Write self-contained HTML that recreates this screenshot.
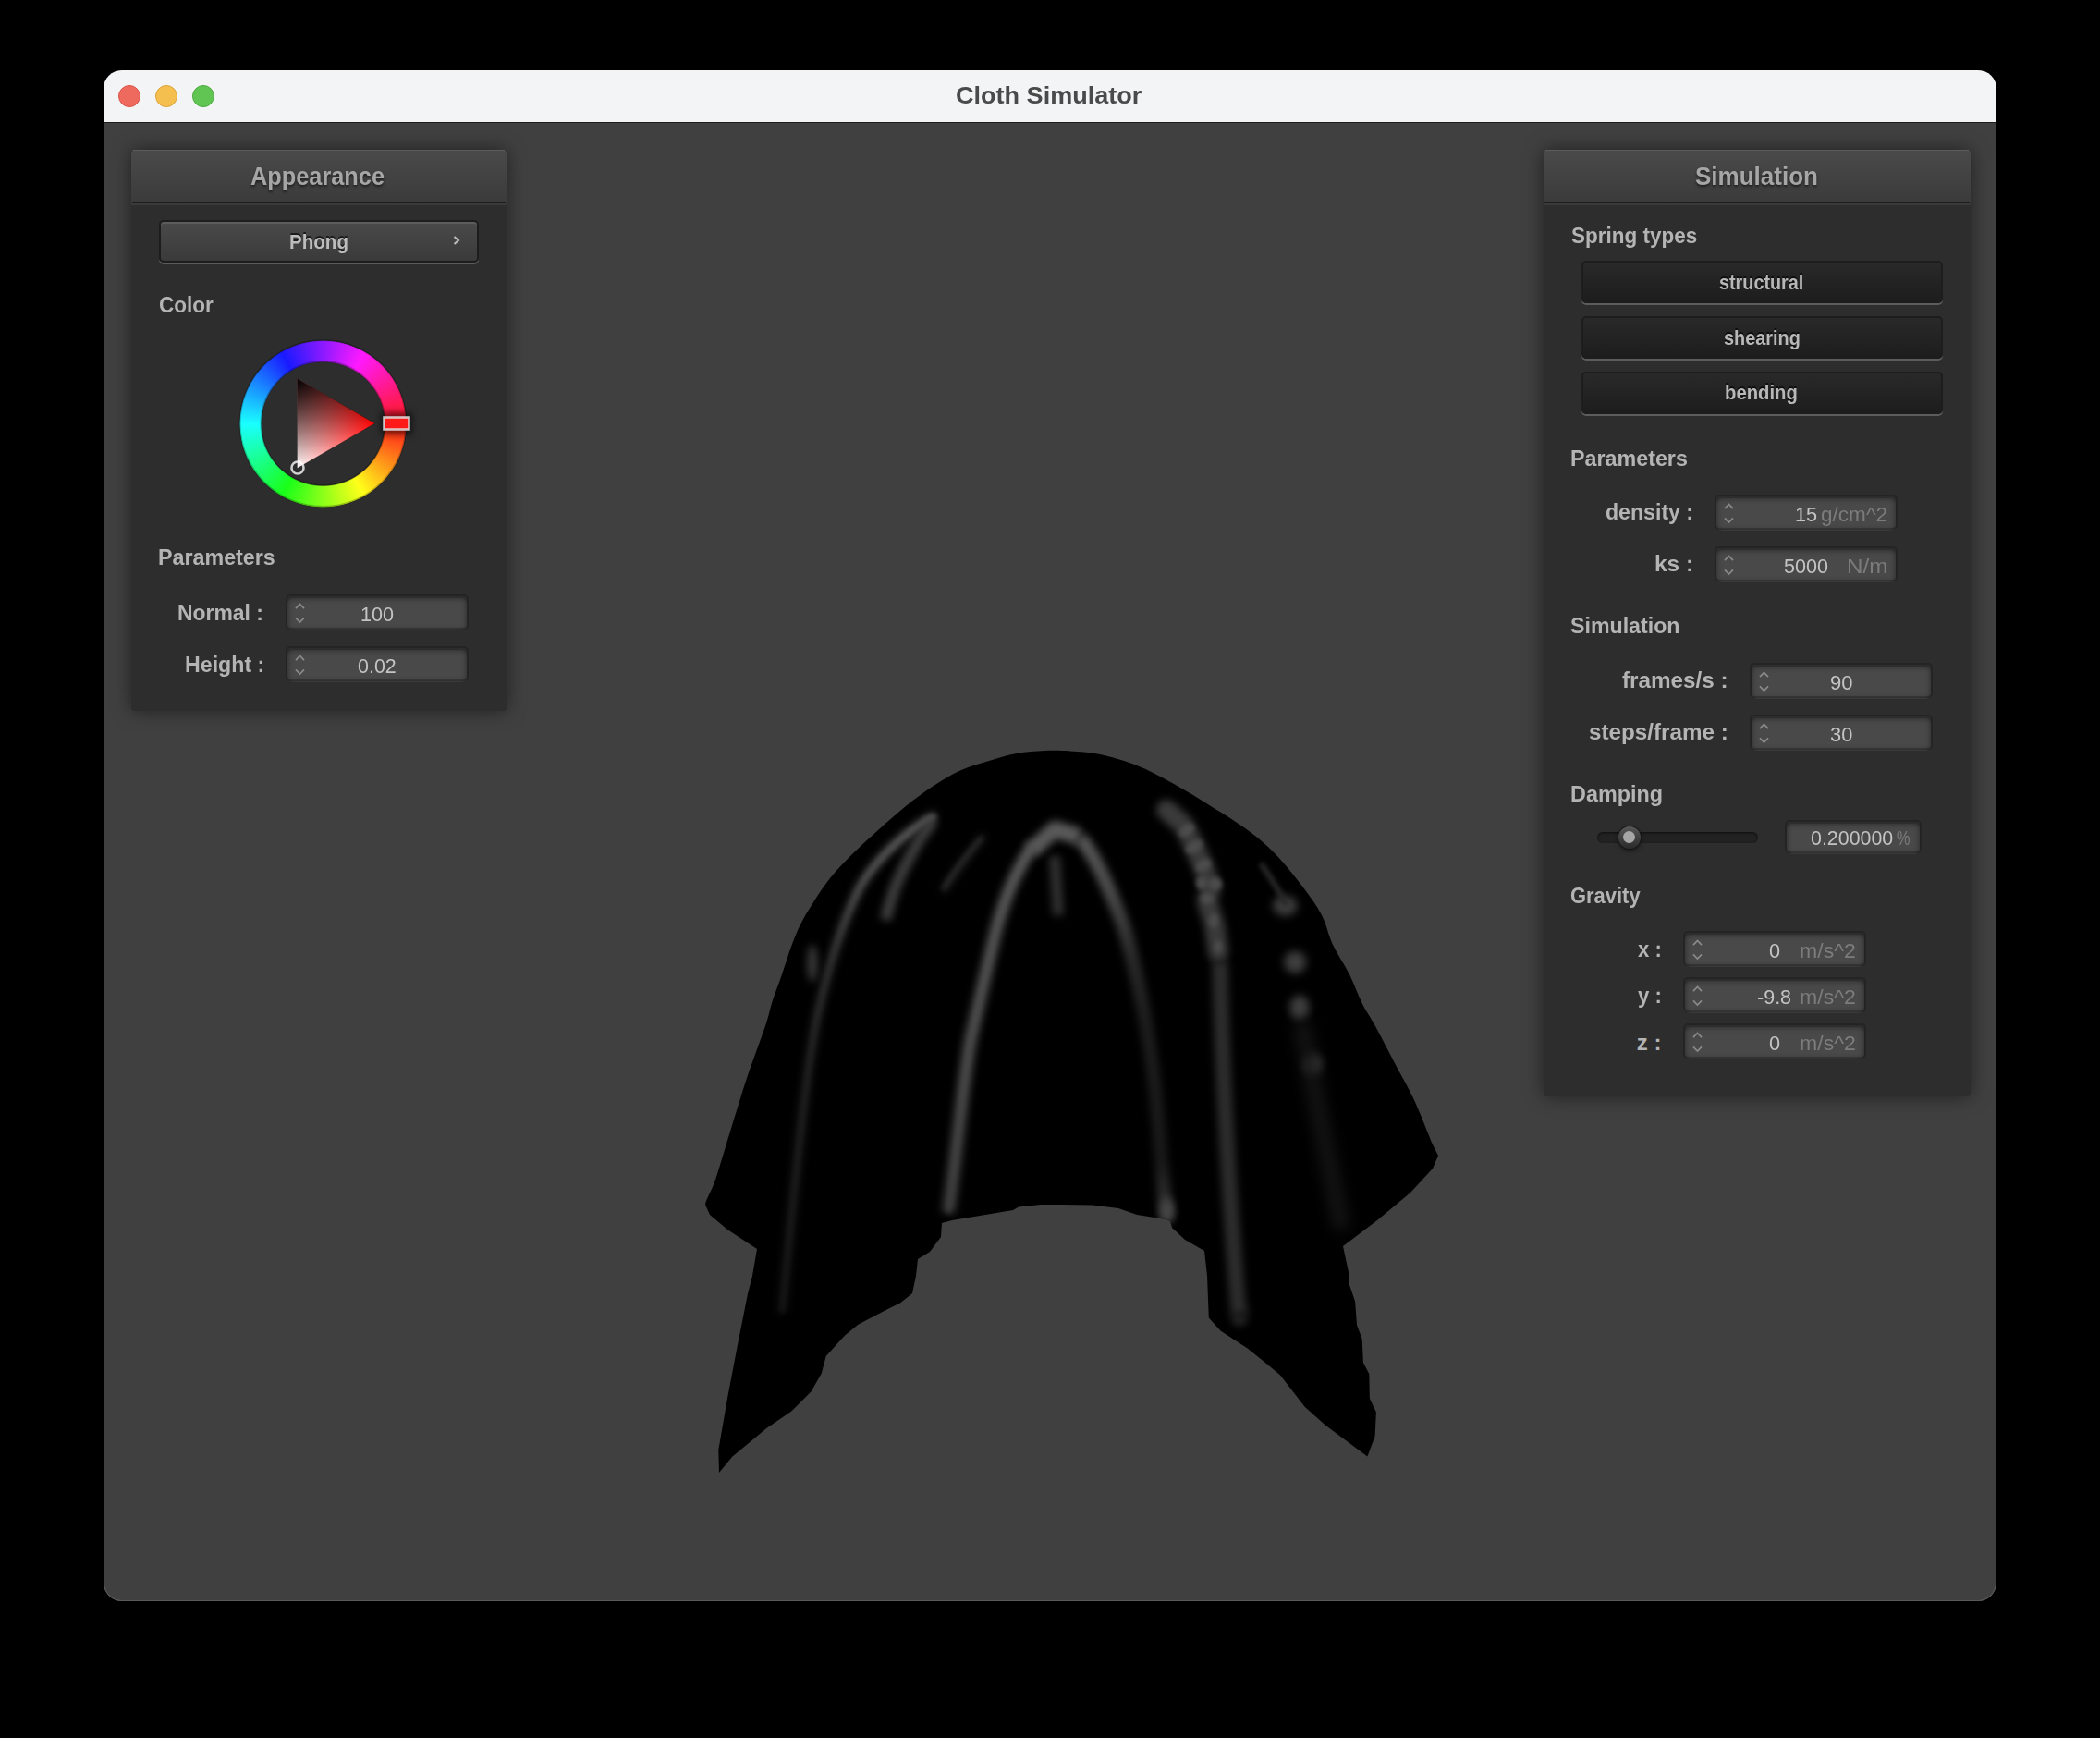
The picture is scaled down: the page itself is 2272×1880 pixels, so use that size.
<!DOCTYPE html>
<html><head><meta charset="utf-8"><title>Cloth Simulator</title>
<style>
html,body{margin:0;padding:0}
body{width:2272px;height:1880px;background:#000;position:relative;overflow:hidden;font-family:"Liberation Sans",sans-serif}
.t{position:absolute;white-space:nowrap;line-height:1;font-family:"Liberation Sans",sans-serif;transform-origin:0 0}
.abs{position:absolute}
#win{position:absolute;left:112px;top:76px;width:2048px;height:1656px;border-radius:20px;background:#404040;box-shadow:inset 0 0 0 1px #5a5a5a}
#titlebar{position:absolute;left:112px;top:76px;width:2048px;height:57px;border-radius:20px 20px 0 0;background:#f3f4f6;border-bottom:1px solid #1c1c1c;box-sizing:border-box}
.light{position:absolute;width:24px;height:24px;border-radius:50%;box-sizing:border-box;border:1px solid}
.panel{position:absolute;background:#2d2d2d;border-radius:4px;box-shadow:0 0 20px rgba(0,0,0,0.5)}
.phdr{position:absolute;height:60px;border-radius:4px 4px 0 0;background:linear-gradient(#4a4a4a,#3a3a3a)}
.phdr::before{content:"";position:absolute;left:2px;right:2px;top:0;height:1px;background:#5c5c5c}
.phdr::after{content:"";position:absolute;left:1px;right:1px;top:56px;height:2px;background:#1d1d1d}
.btn{position:absolute;box-sizing:border-box;border:2px solid #1d1d1d;border-radius:5px;background:linear-gradient(#4a4a4a,#3a3a3a);box-shadow:0 2px 0 #5c5c5c,inset 0 2px 0 #5c5c5c}
.btn.pushed{background:linear-gradient(#292929,#1d1d1d);box-shadow:0 2px 0 #5c5c5c}
.tbf{position:absolute;border-radius:6px;background:#494949;box-shadow:inset 0 0 5px 1px rgba(28,28,28,0.55)}
.tbs{position:absolute;box-sizing:border-box;border:2px solid rgba(0,0,0,0.2);border-radius:5px}
.track{position:absolute;border-radius:6px;background:#222;box-shadow:inset 0 1px 3px rgba(0,0,0,0.6)}
.knob{position:absolute;border-radius:50%;background:linear-gradient(#575757,#2a2a2a);box-shadow:0 0 0 1px rgba(20,20,20,0.8),0 2px 5px rgba(0,0,0,0.6)}
.knobdot{position:absolute;border-radius:50%;background:#a6a6a6}

</style></head><body>
<div id="win"></div>
<div id="titlebar"></div>
<div class="light" style="left:128px;top:92px;background:#ee6a5f;border-color:#d9554a"></div>
<div class="light" style="left:168px;top:92px;background:#f5bf4f;border-color:#dca33a"></div>
<div class="light" style="left:208px;top:92px;background:#61c554;border-color:#4ea93f"></div>
<div class="t" style="left:1033.98px;top:90.18px;font-size:26.5px;font-weight:bold;color:#4a4a4a;transform:scaleX(1.0204);">Cloth Simulator</div>
<svg class="abs" style="left:0;top:0" width="2272" height="1880" viewBox="0 0 2272 1880">
<defs><clipPath id="cc"><path d="M828 1110 C832.3 1097.0 833.0 1091.3 836 1082 C839.0 1072.7 842.7 1063.7 846 1054 C849.3 1044.3 852.7 1033.0 856 1024 C859.3 1015.0 862.0 1008.0 866 1000 C870.0 992.0 874.7 984.3 880 976 C885.3 967.7 891.3 958.3 898 950 C904.7 941.7 911.3 934.7 920 926 C928.7 917.3 940.0 907.0 950 898 C960.0 889.0 970.0 880.0 980 872 C990.0 864.0 1000.0 856.5 1010 850 C1020.0 843.5 1030.0 837.5 1040 833 C1050.0 828.5 1060.0 826.0 1070 823 C1080.0 820.0 1090.0 816.8 1100 815 C1110.0 813.2 1120.3 812.4 1130 812 C1139.7 811.6 1148.0 811.7 1158 812.4 C1168.0 813.1 1178.0 813.4 1190 816 C1202.0 818.6 1216.7 822.7 1230 828 C1243.3 833.3 1256.7 840.7 1270 848 C1283.3 855.3 1296.7 863.7 1310 872 C1323.3 880.3 1338.3 889.3 1350 898 C1361.7 906.7 1370.0 913.7 1380 924 C1390.0 934.3 1401.7 949.0 1410 960 C1418.3 971.0 1424.7 979.7 1430 990 C1435.3 1000.3 1437.0 1011.3 1442 1022 C1447.0 1032.7 1454.7 1043.3 1460 1054 C1465.3 1064.7 1469.3 1076.7 1474 1086 C1478.7 1095.3 1482.0 1099.0 1488 1110 C1494.0 1121.0 1503.0 1138.7 1510 1152 C1517.0 1165.3 1523.3 1175.7 1530 1190 C1536.7 1204.3 1545.7 1228.0 1550 1238 L1556 1250 L1550 1264 L1526 1290 L1490 1320 L1453 1348 L1459 1376 L1459.7 1388.9 L1466.1 1407.8 L1468 1433.2 L1473.7 1448.4 L1474.9 1473.7 L1481.3 1486.3 L1481.9 1512.9 L1488.9 1527.5 L1487.6 1553.4 L1479.4 1575.6 L1434.4 1542 L1411.6 1521.8 L1385.1 1487.6 L1368.6 1473.7 L1349.6 1458.5 L1320.5 1439.5 L1307.8 1425.6 L1306 1380 L1303 1353 L1282 1341 L1268 1328 L1266 1321 L1262 1319 L1230 1314 L1210 1307 L1182 1303.6 L1150 1303 L1126 1303 L1102 1305.6 L1096 1309 L1030 1320 L1019 1323 L1018 1338 L1006 1354 L993 1362 L991 1380 L987 1399 L974.2 1409.3 L958.1 1417.3 L928.4 1432.8 L914.1 1444.6 L906.1 1453.2 L893.7 1466.9 L888.8 1485.4 L877.6 1505.2 L856.6 1526.3 L829.3 1544.9 L807 1563.4 L792.2 1575.8 L778 1593.1 L777.3 1568.4 L787.2 1511.4 L797.1 1459.4 L808.9 1400 L814 1380 L819 1351 L787 1330 L768 1314 L763 1303 C764.0 1296.7 769.5 1289.2 774 1276 C778.5 1262.8 784.0 1243.3 790 1224 C796.0 1204.7 803.7 1179.0 810 1160 L828 1110 Z"/></clipPath>
<filter id="b2" color-interpolation-filters="sRGB" filterUnits="userSpaceOnUse" x="700" y="780" width="900" height="850"><feGaussianBlur stdDeviation="2.5" color-interpolation-filters="sRGB"/></filter>
<filter id="b4" color-interpolation-filters="sRGB" filterUnits="userSpaceOnUse" x="700" y="780" width="900" height="850"><feGaussianBlur stdDeviation="4" color-interpolation-filters="sRGB"/></filter>
<filter id="b8" color-interpolation-filters="sRGB" filterUnits="userSpaceOnUse" x="700" y="780" width="900" height="850"><feGaussianBlur stdDeviation="8" color-interpolation-filters="sRGB"/></filter>
</defs>
<path d="M828 1110 C832.3 1097.0 833.0 1091.3 836 1082 C839.0 1072.7 842.7 1063.7 846 1054 C849.3 1044.3 852.7 1033.0 856 1024 C859.3 1015.0 862.0 1008.0 866 1000 C870.0 992.0 874.7 984.3 880 976 C885.3 967.7 891.3 958.3 898 950 C904.7 941.7 911.3 934.7 920 926 C928.7 917.3 940.0 907.0 950 898 C960.0 889.0 970.0 880.0 980 872 C990.0 864.0 1000.0 856.5 1010 850 C1020.0 843.5 1030.0 837.5 1040 833 C1050.0 828.5 1060.0 826.0 1070 823 C1080.0 820.0 1090.0 816.8 1100 815 C1110.0 813.2 1120.3 812.4 1130 812 C1139.7 811.6 1148.0 811.7 1158 812.4 C1168.0 813.1 1178.0 813.4 1190 816 C1202.0 818.6 1216.7 822.7 1230 828 C1243.3 833.3 1256.7 840.7 1270 848 C1283.3 855.3 1296.7 863.7 1310 872 C1323.3 880.3 1338.3 889.3 1350 898 C1361.7 906.7 1370.0 913.7 1380 924 C1390.0 934.3 1401.7 949.0 1410 960 C1418.3 971.0 1424.7 979.7 1430 990 C1435.3 1000.3 1437.0 1011.3 1442 1022 C1447.0 1032.7 1454.7 1043.3 1460 1054 C1465.3 1064.7 1469.3 1076.7 1474 1086 C1478.7 1095.3 1482.0 1099.0 1488 1110 C1494.0 1121.0 1503.0 1138.7 1510 1152 C1517.0 1165.3 1523.3 1175.7 1530 1190 C1536.7 1204.3 1545.7 1228.0 1550 1238 L1556 1250 L1550 1264 L1526 1290 L1490 1320 L1453 1348 L1459 1376 L1459.7 1388.9 L1466.1 1407.8 L1468 1433.2 L1473.7 1448.4 L1474.9 1473.7 L1481.3 1486.3 L1481.9 1512.9 L1488.9 1527.5 L1487.6 1553.4 L1479.4 1575.6 L1434.4 1542 L1411.6 1521.8 L1385.1 1487.6 L1368.6 1473.7 L1349.6 1458.5 L1320.5 1439.5 L1307.8 1425.6 L1306 1380 L1303 1353 L1282 1341 L1268 1328 L1266 1321 L1262 1319 L1230 1314 L1210 1307 L1182 1303.6 L1150 1303 L1126 1303 L1102 1305.6 L1096 1309 L1030 1320 L1019 1323 L1018 1338 L1006 1354 L993 1362 L991 1380 L987 1399 L974.2 1409.3 L958.1 1417.3 L928.4 1432.8 L914.1 1444.6 L906.1 1453.2 L893.7 1466.9 L888.8 1485.4 L877.6 1505.2 L856.6 1526.3 L829.3 1544.9 L807 1563.4 L792.2 1575.8 L778 1593.1 L777.3 1568.4 L787.2 1511.4 L797.1 1459.4 L808.9 1400 L814 1380 L819 1351 L787 1330 L768 1314 L763 1303 C764.0 1296.7 769.5 1289.2 774 1276 C778.5 1262.8 784.0 1243.3 790 1224 C796.0 1204.7 803.7 1179.0 810 1160 L828 1110 Z" fill="#000"/>
<g clip-path="url(#cc)">
<linearGradient id="gL" gradientUnits="userSpaceOnUse" x1="0" y1="880" x2="0" y2="1420"><stop offset="0" stop-color="#5c5c5c"/><stop offset="0.12" stop-color="#505050"/><stop offset="0.3" stop-color="#303030"/><stop offset="0.5" stop-color="#222"/><stop offset="1" stop-color="#161616"/></linearGradient>
<linearGradient id="gC" gradientUnits="userSpaceOnUse" x1="0" y1="900" x2="0" y2="1320"><stop offset="0" stop-color="#555"/><stop offset="0.5" stop-color="#4a4a4a"/><stop offset="1" stop-color="#3c3c3c"/></linearGradient>
<linearGradient id="gR" gradientUnits="userSpaceOnUse" x1="0" y1="900" x2="0" y2="1320"><stop offset="0" stop-color="#575757"/><stop offset="0.15" stop-color="#4a4a4a"/><stop offset="0.33" stop-color="#282828"/><stop offset="0.5" stop-color="#1c1c1c"/><stop offset="0.85" stop-color="#181818"/><stop offset="1" stop-color="#3a3a3a"/></linearGradient>
<!-- soft edge sheen on left side -->

<!-- left ridge -->
<path d="M1012 882 C 985 896, 950 925, 930 960 C 910 1000, 895 1050, 884 1100 C 870 1170, 858 1300, 846 1420" fill="none" stroke="url(#gL)" stroke-width="9" filter="url(#b4)"/>
<path d="M1012 882 C 985 896, 950 925, 930 960 C 910 1000, 895 1050, 884 1100 C 870 1170, 858 1300, 846 1420" fill="none" stroke="url(#gL)" stroke-width="4" filter="url(#b2)" opacity="0.8"/>
<path d="M1010 888 C 995 905, 985 925, 975 945 S 962 980, 958 995" fill="none" stroke="#3e3e3e" stroke-width="12" filter="url(#b4)"/>
<path d="M1064 904 C 1047 925, 1032 945, 1020 964" fill="none" stroke="#2c2c2c" stroke-width="6" filter="url(#b4)"/><path d="M1062 906 C 1045 925, 1030 945, 1020 962" fill="none" stroke="#333" stroke-width="2" filter="url(#b2)"/>
<ellipse cx="879" cy="1042" rx="6" ry="20" fill="#363636" filter="url(#b4)"/>
<!-- center-left ridge -->
<path d="M1118 914 C 1100 940, 1086 975, 1078 1005 C 1068 1045, 1058 1090, 1050 1125 C 1042 1170, 1036 1240, 1026 1312" fill="none" stroke="url(#gC)" stroke-width="14" filter="url(#b4)"/>
<path d="M1118 914 C 1100 940, 1086 975, 1078 1005 C 1068 1045, 1058 1090, 1050 1125 C 1042 1170, 1036 1240, 1026 1312" fill="none" stroke="url(#gC)" stroke-width="4" filter="url(#b2)" opacity="0.7"/>
<!-- top cap -->
<path d="M1116 920 L 1141 897 L 1168 905" fill="none" stroke="#595959" stroke-width="18" stroke-linejoin="round" filter="url(#b4)"/>
<path d="M1141 926 L 1145 990" fill="none" stroke="#303030" stroke-width="12" filter="url(#b4)"/>
<!-- center-right ridge -->
<path d="M1168 906 C 1185 925, 1200 960, 1215 1000 C 1230 1050, 1242 1110, 1250 1180 C 1255 1230, 1258 1280, 1262 1318" fill="none" stroke="url(#gR)" stroke-width="15" filter="url(#b4)"/>
<ellipse cx="1263" cy="1310" rx="7" ry="14" fill="#464646" filter="url(#b4)"/>
<!-- bumpy strip -->
<path d="M1262 876 L 1280 892 L 1292 915 L 1302 938 L 1310 960 L 1306 975 L 1314 1000 L 1318 1030" fill="none" stroke="#3a3a3a" stroke-width="22" stroke-linejoin="round" stroke-linecap="round" filter="url(#b4)"/>
<g fill="#4c4c4c" filter="url(#b2)">
<ellipse cx="1284" cy="898" rx="9" ry="6" transform="rotate(-35 1284 898)"/>
<ellipse cx="1292" cy="916" rx="10" ry="6" transform="rotate(-30 1292 916)"/>
<ellipse cx="1302" cy="936" rx="9" ry="6" transform="rotate(-30 1302 936)"/>
<ellipse cx="1300" cy="955" rx="6" ry="7"/>
<ellipse cx="1315" cy="956" rx="7" ry="7"/>
<ellipse cx="1306" cy="972" rx="7" ry="6"/>
<ellipse cx="1313" cy="996" rx="5" ry="8"/>
<ellipse cx="1318" cy="1024" rx="4" ry="7"/>
</g>
<path d="M1320 1040 C 1321 1100, 1324 1200, 1334 1340 S 1340 1400, 1342 1420" fill="none" stroke="#2c2c2c" stroke-width="17" filter="url(#b4)"/>
<!-- far right -->
<g fill="#3e3e3e" filter="url(#b4)" transform="translate(1400 1060) scale(1.2) translate(-1400 -1060)">
<ellipse cx="1392" cy="993" rx="11" ry="9"/>
<ellipse cx="1401" cy="1044" rx="10" ry="10"/>
<ellipse cx="1405" cy="1085" rx="9" ry="11"/>
<ellipse cx="1417" cy="1136" rx="8" ry="10"/>
</g>
<path d="M1364 934 C 1375 950, 1385 965, 1392 980" fill="none" stroke="#282828" stroke-width="6" filter="url(#b2)"/>
<path d="M1408 1105 C 1422 1180, 1440 1270, 1452 1330" fill="none" stroke="#161616" stroke-width="16" filter="url(#b8)"/>

</g>
</svg>
<div class="panel" style="left:142px;top:162px;width:406px;height:607px"></div>
<div class="phdr" style="left:142px;top:162px;width:406px"></div>
<div class="panel" style="left:1670px;top:162px;width:462px;height:1024px"></div>
<div class="phdr" style="left:1670px;top:162px;width:462px"></div>
<div class="t" style="left:271.41px;top:177.03px;font-size:27.5px;font-weight:bold;color:#a6a6a6;transform:scaleX(0.9212);text-shadow:0 2px 3px rgba(0,0,0,0.55);">Appearance</div>
<div class="btn" style="left:172px;top:238px;width:346px;height:46px"></div>
<div class="t" style="left:313.07px;top:252.23px;font-size:21.5px;font-weight:bold;color:#bcbcbc;transform:scaleX(0.9562);text-shadow:0 -2px 0 rgba(0,0,0,0.6);">Phong</div>
<svg class="abs" style="left:487px;top:252px" width="14" height="16"><path d="M4.5 4 L9 8 L4.5 12" fill="none" stroke="#bdbdbd" stroke-width="2"/></svg>
<div class="t" style="left:171.88px;top:318.18px;font-size:24.5px;font-weight:bold;color:#b4b4b4;transform:scaleX(0.9195);">Color</div>
<div class="abs" style="left:259px;top:368px;width:181px;height:181px;border-radius:50%;background:conic-gradient(from 90deg,hsl(0,100%,55%),hsl(60,100%,55%),hsl(120,100%,55%),hsl(180,100%,55%),hsl(240,100%,55%),hsl(300,100%,55%),hsl(360,100%,55%));-webkit-mask:radial-gradient(circle,transparent 66.5px,#000 67.5px,#000 89.5px,transparent 90.5px);mask:radial-gradient(circle,transparent 66.5px,#000 67.5px,#000 89.5px,transparent 90.5px)"></div>
<svg class="abs" style="left:240px;top:350px" width="220" height="220" viewBox="0 0 220 220">
<defs>
<linearGradient id="tg1" gradientUnits="userSpaceOnUse" x1="165.5" y1="108" x2="81.5" y2="156.5"><stop offset="0" stop-color="hsl(0,100%,50%)"/><stop offset="1" stop-color="#fff"/></linearGradient>
<linearGradient id="tg2" gradientUnits="userSpaceOnUse" x1="123.5" y1="132.25" x2="81.5" y2="59.5"><stop offset="0" stop-color="#000" stop-opacity="0"/><stop offset="1" stop-color="#000" stop-opacity="1"/></linearGradient>
</defs>
<circle cx="109.5" cy="108" r="67" fill="none" stroke="rgba(0,0,0,0.25)" stroke-width="2"/>
<circle cx="109.5" cy="108" r="90" fill="none" stroke="rgba(0,0,0,0.25)" stroke-width="2"/>
<path d="M165.5 108 L81.5 156.5 L81.5 59.5 Z" fill="url(#tg1)"/>
<path d="M165.5 108 L81.5 156.5 L81.5 59.5 Z" fill="url(#tg2)" stroke="rgba(0,0,0,0.25)" stroke-width="1"/>
<circle cx="82" cy="156" r="6.5" fill="none" stroke="rgba(255,255,255,0.78)" stroke-width="2.5"/>
<filter id="bl" color-interpolation-filters="sRGB" filterUnits="userSpaceOnUse" x="140" y="70" width="80" height="80"><feGaussianBlur stdDeviation="3.5"/></filter>
<rect x="172" y="96" width="34" height="24" fill="rgba(0,0,0,0.55)" filter="url(#bl)"/>
<rect x="175.5" y="101.5" width="27" height="13" fill="hsl(0,100%,55%)" stroke="rgba(225,225,225,0.85)" stroke-width="2.6"/>
</svg>

<div class="t" style="left:170.95px;top:591.40px;font-size:24px;font-weight:bold;color:#b4b4b4;transform:scaleX(0.9696);">Parameters</div>
<div class="t" style="left:191.67px;top:650.90px;font-size:24px;font-weight:bold;color:#b4b4b4;transform:scaleX(0.9551);">Normal :</div>
<div class="tbf" style="left:311px;top:647px;width:194px;height:35px"></div>
<div class="tbs" style="left:309px;top:643px;width:198px;height:38px"></div>
<svg class="abs" style="left:0;top:0;overflow:visible" width="1" height="1"><path d="M320.0 658.1 L324.5 653.5 L329.0 658.1" fill="none" stroke="#8a8a8a" stroke-width="1.7"/><path d="M320.0 668.4 L324.5 673 L329.0 668.4" fill="none" stroke="#8a8a8a" stroke-width="1.7"/></svg>
<div class="t" style="left:389.68px;top:653.60px;font-size:22px;font-weight:normal;color:#c4c4c4;transform:scaleX(0.9810);">100</div>
<div class="t" style="left:199.55px;top:707.00px;font-size:24px;font-weight:bold;color:#b4b4b4;transform:scaleX(0.9661);">Height :</div>
<div class="tbf" style="left:311px;top:703px;width:194px;height:35px"></div>
<div class="tbs" style="left:309px;top:699px;width:198px;height:38px"></div>
<svg class="abs" style="left:0;top:0;overflow:visible" width="1" height="1"><path d="M320.0 714.1 L324.5 709.5 L329.0 714.1" fill="none" stroke="#8a8a8a" stroke-width="1.7"/><path d="M320.0 724.4 L324.5 729 L329.0 724.4" fill="none" stroke="#8a8a8a" stroke-width="1.7"/></svg>
<div class="t" style="left:387.27px;top:709.50px;font-size:22px;font-weight:normal;color:#c4c4c4;transform:scaleX(0.9756);">0.02</div>
<div class="t" style="left:1834.29px;top:177.03px;font-size:27.5px;font-weight:bold;color:#a6a6a6;transform:scaleX(0.9457);text-shadow:0 2px 3px rgba(0,0,0,0.55);">Simulation</div>
<div class="t" style="left:1700.30px;top:243.00px;font-size:24px;font-weight:bold;color:#b4b4b4;transform:scaleX(0.9370);">Spring types</div>
<div class="btn pushed" style="left:1711px;top:282px;width:391px;height:46px"></div>
<div class="t" style="left:1860.01px;top:296.43px;font-size:21.5px;font-weight:bold;color:#b8b8b8;transform:scaleX(0.9206);text-shadow:0 -2px 0 rgba(0,0,0,0.6);">structural</div>
<div class="btn pushed" style="left:1711px;top:342px;width:391px;height:46px"></div>
<div class="t" style="left:1864.81px;top:355.93px;font-size:21.5px;font-weight:bold;color:#b8b8b8;transform:scaleX(0.9246);text-shadow:0 -2px 0 rgba(0,0,0,0.6);">shearing</div>
<div class="btn pushed" style="left:1711px;top:402px;width:391px;height:46px"></div>
<div class="t" style="left:1865.68px;top:415.43px;font-size:21.5px;font-weight:bold;color:#b8b8b8;transform:scaleX(0.9437);text-shadow:0 -2px 0 rgba(0,0,0,0.6);">bending</div>
<div class="t" style="left:1698.74px;top:483.60px;font-size:24px;font-weight:bold;color:#b4b4b4;transform:scaleX(0.9704);">Parameters</div>
<div class="t" style="left:1737.04px;top:542.20px;font-size:24px;font-weight:bold;color:#b4b4b4;transform:scaleX(0.9634);">density :</div>
<div class="tbf" style="left:1857px;top:539px;width:194px;height:35px"></div>
<div class="tbs" style="left:1855px;top:535px;width:198px;height:38px"></div>
<svg class="abs" style="left:0;top:0;overflow:visible" width="1" height="1"><path d="M1866.0 550.1 L1870.5 545.5 L1875.0 550.1" fill="none" stroke="#8a8a8a" stroke-width="1.7"/><path d="M1866.0 560.4 L1870.5 565 L1875.0 560.4" fill="none" stroke="#8a8a8a" stroke-width="1.7"/></svg>
<div class="t" style="left:1941.77px;top:546.00px;font-size:22px;font-weight:normal;color:#c4c4c4;transform:scaleX(0.9885);">15</div>
<div class="t" style="left:1969.97px;top:546.00px;font-size:22px;font-weight:normal;color:#7c7c7c;transform:scaleX(1.0256);">g/cm^2</div>
<div class="t" style="left:1790.21px;top:598.20px;font-size:24px;font-weight:bold;color:#b4b4b4;transform:scaleX(1.0201);">ks :</div>
<div class="tbf" style="left:1857px;top:595px;width:194px;height:35px"></div>
<div class="tbs" style="left:1855px;top:591px;width:198px;height:38px"></div>
<svg class="abs" style="left:0;top:0;overflow:visible" width="1" height="1"><path d="M1866.0 606.1 L1870.5 601.5 L1875.0 606.1" fill="none" stroke="#8a8a8a" stroke-width="1.7"/><path d="M1866.0 616.4 L1870.5 621 L1875.0 616.4" fill="none" stroke="#8a8a8a" stroke-width="1.7"/></svg>
<div class="t" style="left:1929.72px;top:601.80px;font-size:22px;font-weight:normal;color:#c4c4c4;transform:scaleX(0.9799);">5000</div>
<div class="t" style="left:1998.07px;top:601.80px;font-size:22px;font-weight:normal;color:#7c7c7c;transform:scaleX(1.1007);">N/m</div>
<div class="t" style="left:1699.48px;top:665.30px;font-size:24px;font-weight:bold;color:#b4b4b4;transform:scaleX(0.9660);">Simulation</div>
<div class="t" style="left:1755.49px;top:724.20px;font-size:24px;font-weight:bold;color:#b4b4b4;transform:scaleX(1.0113);">frames/s :</div>
<div class="tbf" style="left:1895px;top:721px;width:194px;height:35px"></div>
<div class="tbs" style="left:1893px;top:717px;width:198px;height:38px"></div>
<svg class="abs" style="left:0;top:0;overflow:visible" width="1" height="1"><path d="M1904.0 732.1 L1908.5 727.5 L1913.0 732.1" fill="none" stroke="#8a8a8a" stroke-width="1.7"/><path d="M1904.0 742.4 L1908.5 747 L1913.0 742.4" fill="none" stroke="#8a8a8a" stroke-width="1.7"/></svg>
<div class="t" style="left:1979.70px;top:728.00px;font-size:22px;font-weight:normal;color:#c4c4c4;transform:scaleX(1.0022);">90</div>
<div class="t" style="left:1719.39px;top:780.10px;font-size:24px;font-weight:bold;color:#b4b4b4;transform:scaleX(1.0092);">steps/frame :</div>
<div class="tbf" style="left:1895px;top:777px;width:194px;height:35px"></div>
<div class="tbs" style="left:1893px;top:773px;width:198px;height:38px"></div>
<svg class="abs" style="left:0;top:0;overflow:visible" width="1" height="1"><path d="M1904.0 788.1 L1908.5 783.5 L1913.0 788.1" fill="none" stroke="#8a8a8a" stroke-width="1.7"/><path d="M1904.0 798.4 L1908.5 803 L1913.0 798.4" fill="none" stroke="#8a8a8a" stroke-width="1.7"/></svg>
<div class="t" style="left:1979.96px;top:784.00px;font-size:22px;font-weight:normal;color:#c4c4c4;transform:scaleX(0.9913);">30</div>
<div class="t" style="left:1698.74px;top:847.00px;font-size:24px;font-weight:bold;color:#b4b4b4;transform:scaleX(0.9739);">Damping</div>
<div class="track" style="left:1728px;top:900px;width:174px;height:12px"></div>
<div class="knob" style="left:1750.5px;top:893.5px;width:24px;height:24px"></div>
<div class="knobdot" style="left:1756px;top:899px;width:13px;height:13px"></div>
<div class="tbf" style="left:1933px;top:891px;width:144px;height:33px"></div>
<div class="tbs" style="left:1931px;top:887px;width:148px;height:36px"></div>
<div class="t" style="left:1959.27px;top:895.50px;font-size:22px;font-weight:normal;color:#c4c4c4;transform:scaleX(0.9729);">0.200000</div>
<div class="t" style="left:2052.15px;top:895.50px;font-size:22px;font-weight:normal;color:#7c7c7c;transform:scaleX(0.7389);">%</div>
<div class="t" style="left:1699.29px;top:957.00px;font-size:24px;font-weight:bold;color:#b4b4b4;transform:scaleX(0.9141);">Gravity</div>
<div class="t" style="left:1771.57px;top:1014.80px;font-size:24px;font-weight:bold;color:#b4b4b4;transform:scaleX(0.9216);">x :</div>
<div class="tbf" style="left:1823px;top:1011px;width:194px;height:35px"></div>
<div class="tbs" style="left:1821px;top:1007px;width:198px;height:38px"></div>
<svg class="abs" style="left:0;top:0;overflow:visible" width="1" height="1"><path d="M1832.0 1022.1 L1836.5 1017.5 L1841.0 1022.1" fill="none" stroke="#8a8a8a" stroke-width="1.7"/><path d="M1832.0 1032.4 L1836.5 1037 L1841.0 1032.4" fill="none" stroke="#8a8a8a" stroke-width="1.7"/></svg>
<div class="t" style="left:1913.66px;top:1017.70px;font-size:22px;font-weight:normal;color:#c4c4c4;transform:scaleX(0.9860);">0</div>
<div class="t" style="left:1947.03px;top:1017.70px;font-size:22px;font-weight:normal;color:#7c7c7c;transform:scaleX(1.0486);">m/s^2</div>
<div class="t" style="left:1771.57px;top:1065.10px;font-size:24px;font-weight:bold;color:#b4b4b4;transform:scaleX(0.9216);">y :</div>
<div class="tbf" style="left:1823px;top:1061px;width:194px;height:35px"></div>
<div class="tbs" style="left:1821px;top:1057px;width:198px;height:38px"></div>
<svg class="abs" style="left:0;top:0;overflow:visible" width="1" height="1"><path d="M1832.0 1072.1 L1836.5 1067.5 L1841.0 1072.1" fill="none" stroke="#8a8a8a" stroke-width="1.7"/><path d="M1832.0 1082.4 L1836.5 1087 L1841.0 1082.4" fill="none" stroke="#8a8a8a" stroke-width="1.7"/></svg>
<div class="t" style="left:1900.62px;top:1068.00px;font-size:22px;font-weight:normal;color:#c4c4c4;transform:scaleX(0.9778);">-9.8</div>
<div class="t" style="left:1947.03px;top:1068.00px;font-size:22px;font-weight:normal;color:#7c7c7c;transform:scaleX(1.0486);">m/s^2</div>
<div class="t" style="left:1770.80px;top:1115.50px;font-size:24px;font-weight:bold;color:#b4b4b4;transform:scaleX(1.0000);">z :</div>
<div class="tbf" style="left:1823px;top:1111px;width:194px;height:35px"></div>
<div class="tbs" style="left:1821px;top:1107px;width:198px;height:38px"></div>
<svg class="abs" style="left:0;top:0;overflow:visible" width="1" height="1"><path d="M1832.0 1122.1 L1836.5 1117.5 L1841.0 1122.1" fill="none" stroke="#8a8a8a" stroke-width="1.7"/><path d="M1832.0 1132.4 L1836.5 1137 L1841.0 1132.4" fill="none" stroke="#8a8a8a" stroke-width="1.7"/></svg>
<div class="t" style="left:1913.66px;top:1118.40px;font-size:22px;font-weight:normal;color:#c4c4c4;transform:scaleX(0.9860);">0</div>
<div class="t" style="left:1947.03px;top:1118.40px;font-size:22px;font-weight:normal;color:#7c7c7c;transform:scaleX(1.0486);">m/s^2</div>

</body></html>
